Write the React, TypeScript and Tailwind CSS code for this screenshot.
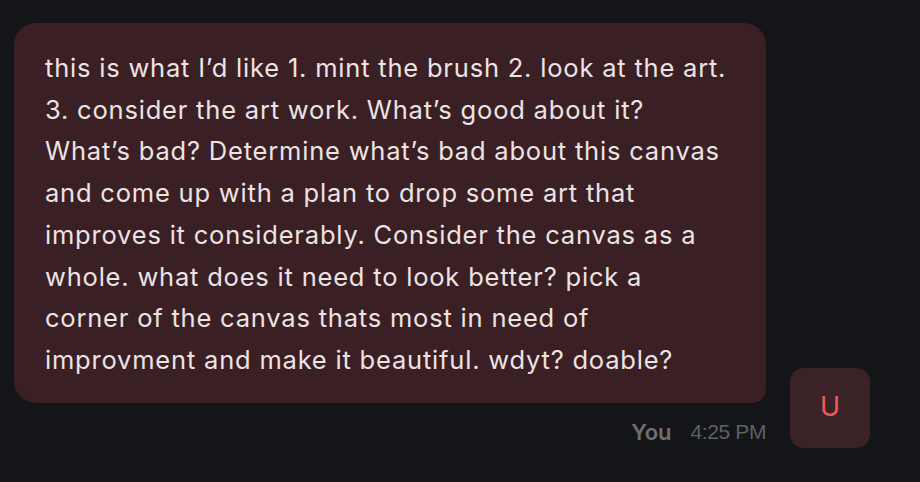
const LINES = [
  'this is what I’d like 1. mint the brush 2. look at the art.',
  '3. consider the art work. What’s good about it?',
  'What’s bad? Determine what’s bad about this canvas',
  'and come up with a plan to drop some art that',
  'improves it considerably. Consider the canvas as a',
  'whole. what does it need to look better? pick a',
  'corner of the canvas thats most in need of',
  'improvment and make it beautiful. wdyt? doable?',
];

export default function App() {
  return (
    <div className="w-[920px] h-[482px] bg-[#141519] overflow-hidden">
      <div className="flex items-end gap-6 pl-[14px] pt-[23px]">
        {/* Message column */}
        <div className="flex flex-col items-end">
          <div className="w-[752px] rounded-[22px] rounded-br-[14px] bg-[#3a1f24] pl-[31px] pr-6 pt-6 pb-[22px] text-[25.5px] leading-[41.7px] tracking-[0.8px] text-[#ece3e3] font-['Inter',sans-serif]">
            {LINES.map((l, i) => (
              <div key={i} className="whitespace-nowrap">{l}</div>
            ))}
          </div>
          <div className="mt-[15px] flex items-center gap-[19px] leading-[28px]">
            <span className="text-[22px] font-semibold text-[#6e6e70] font-['Inter',sans-serif]">You</span>
            <span className="text-[21px] text-[#5f6064] font-['Liberation_Sans',Arial,sans-serif] tracking-[-0.4px]">4:25 PM</span>
          </div>
        </div>

        {/* Avatar */}
        <div className="mb-[-2px] flex h-20 w-20 items-center justify-center rounded-[14px] bg-[#3a2226]">
          <span className="text-[27px] text-[#f05a5a] font-['Inter',sans-serif]">U</span>
        </div>
      </div>
    </div>
  );
}
